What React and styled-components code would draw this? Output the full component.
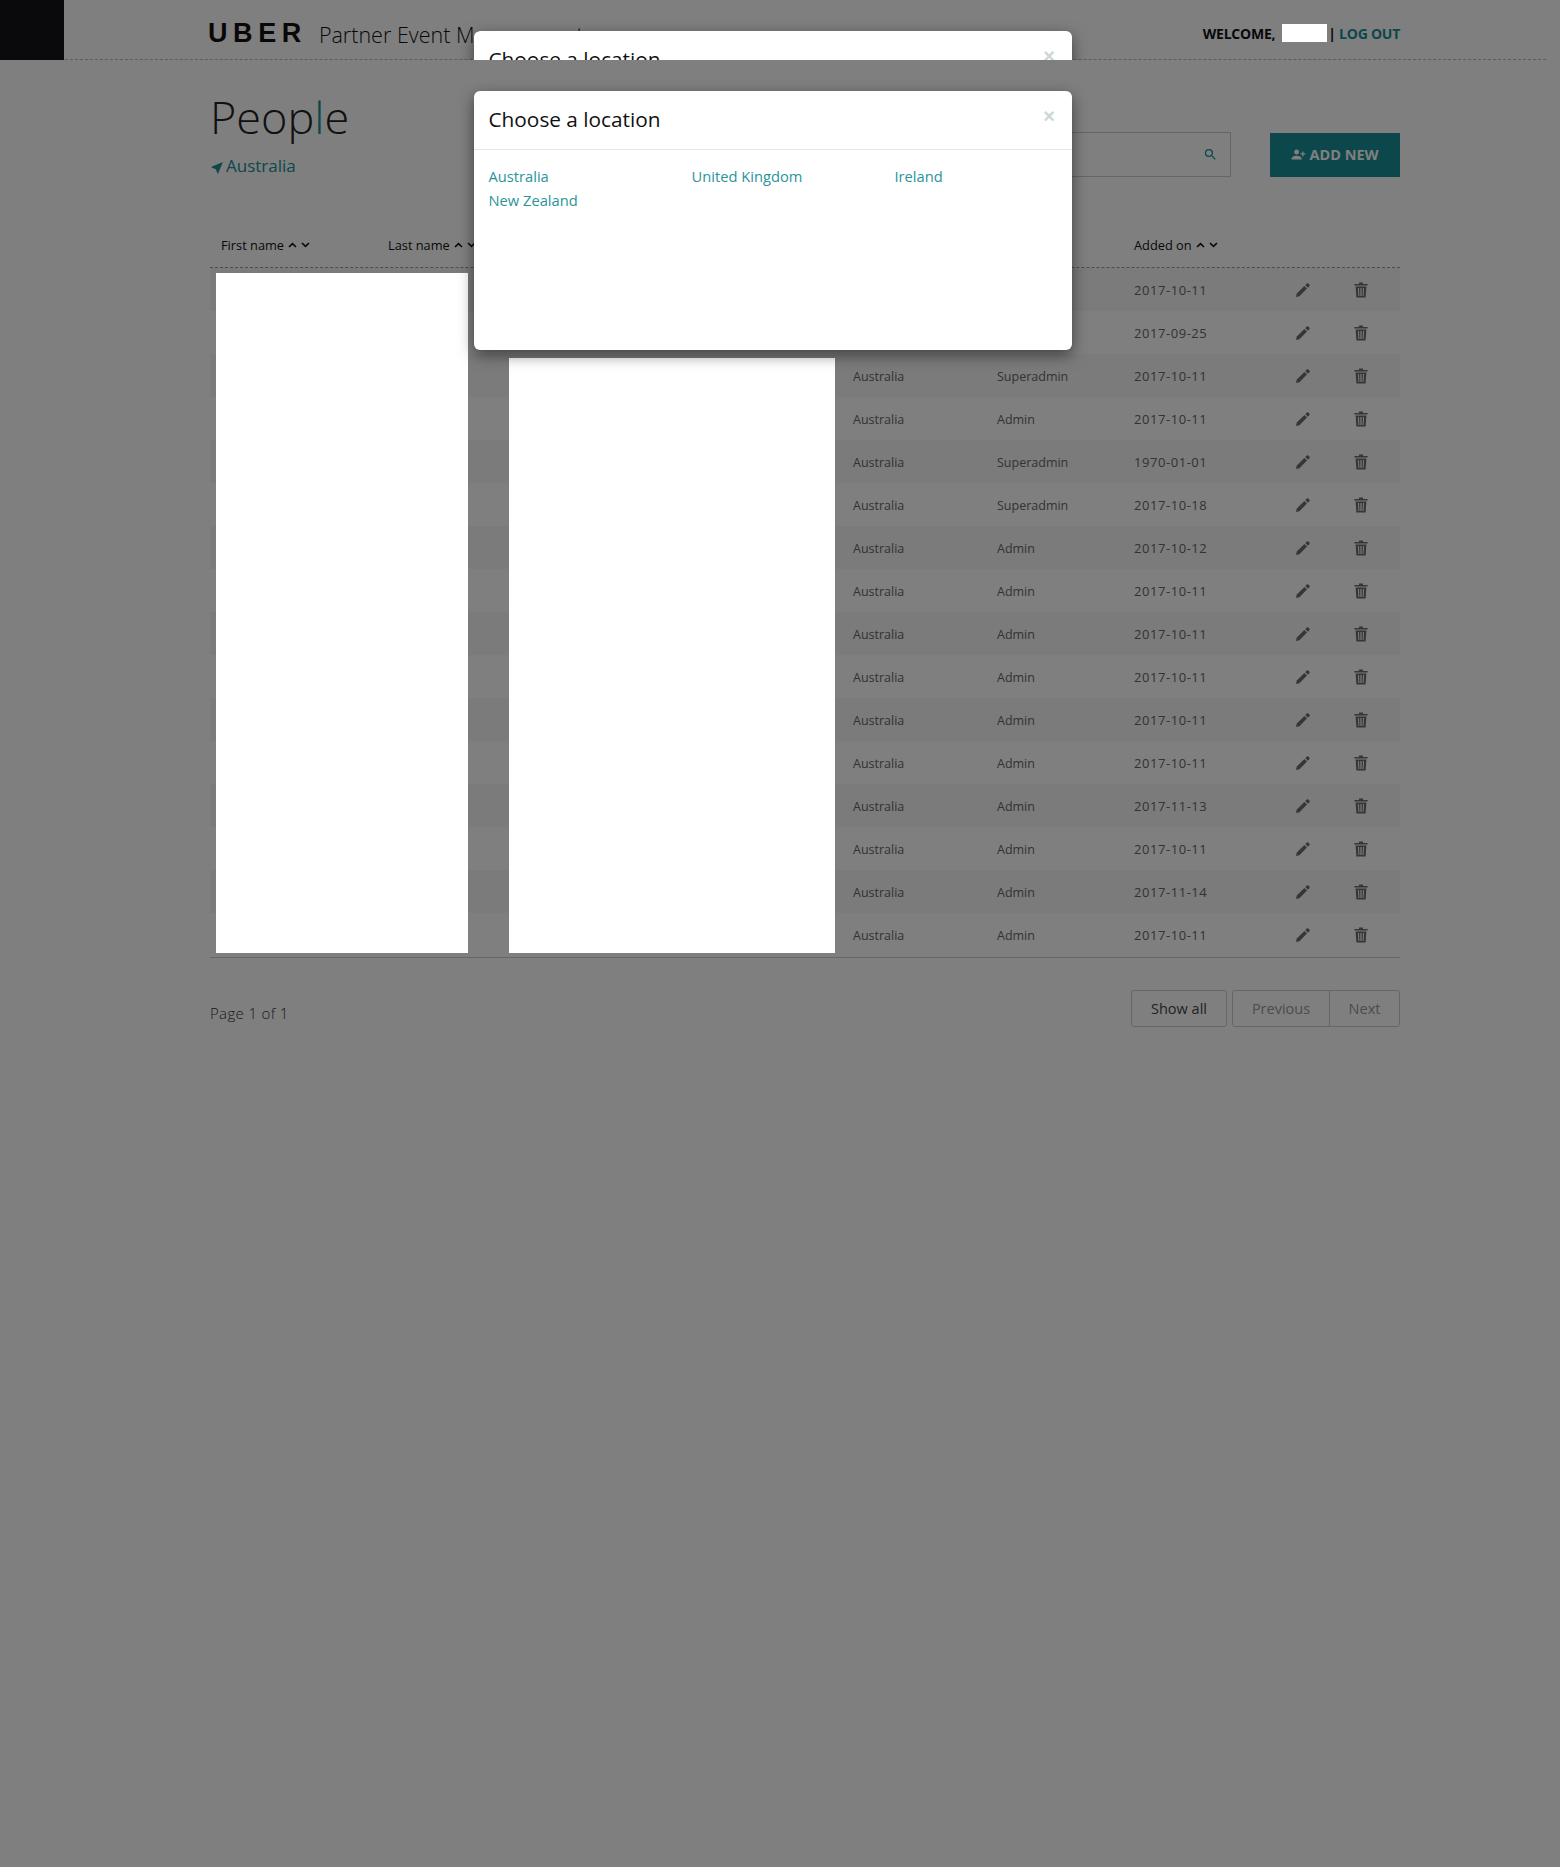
import React from 'react';
import styled, { createGlobalStyle } from 'styled-components';
import { MdPersonAdd, MdSearch, MdNavigation } from 'react-icons/md';

const Global = createGlobalStyle`
  html, body { margin: 0; padding: 0; background: #fff; }
  body { font-family: "Open Sans", "Noto Sans", sans-serif; color: #333; }
  * { box-sizing: border-box; }
`;

const Page = styled.div`
  position: relative;
  width: 1560px;
  height: 1867px;
  overflow: hidden;
`;

const Header = styled.header`
  height: 60px;
  width: 1546px;
  display: flex;
  align-items: center;
  border-bottom: 1px dashed #bbb;
`;

const BlackBox = styled.div`
  width: 64px;
  height: 60px;
  background: #14141a;
  flex: none;
`;

const Logo = styled.span`
  margin-left: 144px;
  font-family: "Liberation Sans", sans-serif;
  font-weight: 700;
  font-size: 27px;
  letter-spacing: 5.6px;
  color: #111;
  line-height: 1;
  position: relative;
  top: 4px;
`;

const AppName = styled.span`
  margin-left: 12px;
  font-size: 21.5px;
  font-weight: 300;
  color: #111;
  position: relative;
  top: 5px;
`;

const UserArea = styled.div`
  margin-left: auto;
  margin-right: 146px;
  display: flex;
  align-items: center;
  font-size: 14px;
  font-weight: 700;
  color: #111;
  white-space: pre;
  position: relative;
  top: 4px;
  letter-spacing: -.25px;
`;

const NameSlot = styled.span`
  display: inline-block;
  width: 47px;
  height: 18px;
  margin-left: 3px;
  margin-right: 3px;
`;

const LogOut = styled.a`
  color: #178f97;
`;

const Main = styled.main`
  width: 1190px;
  margin-left: 210px;
`;

const TopRow = styled.div`
  height: 165px;
  display: flex;
  position: relative;
`;

const TitleBlock = styled.div`
  padding-top: 24px;
`;

const Title = styled.h1`
  margin: 0;
  font-size: 45px;
  line-height: 66px;
  font-weight: 300;
  color: #222;
`;

const TitleAccent = styled.span`
  color: #178f97;
`;

const Place = styled.div`
  display: flex;
  align-items: center;
  font-size: 17px;
  line-height: 24px;
  color: #178f97;
  margin-top: 4px;
  svg { transform: rotate(45deg); margin: 0 0 0 1px; }
`;

const Tools = styled.div`
  margin-left: auto;
  display: flex;
  padding-top: 72px;
`;

const SearchBox = styled.div`
  width: 400px;
  height: 45px;
  border: 1px solid #ccc;
  display: flex;
  align-items: center;
  justify-content: flex-end;
  padding-right: 12px;
  color: #178f97;
`;

const AddButton = styled.button`
  width: 130px;
  height: 44px;
  margin-left: 39px;
  margin-top: 1px;
  padding: 0 0 2px;
  border: 0;
  background: #178f97;
  color: #fff;
  font-family: inherit;
  font-size: 14.5px;
  font-weight: 700;
  display: flex;
  align-items: center;
  justify-content: center;
  gap: 3px;
  svg { transform: scaleX(-1); }
`;

const HeadRow = styled.div`
  display: grid;
  grid-template-columns: 167px 465px 144px 137px 1fr;
  height: 43px;
  padding-bottom: 2px;
  align-items: center;
  border-bottom: 1px dashed #999;
  font-size: 12.8px;
  color: #111;
`;

const HeadCell = styled.div`
  padding-left: 11px;
  display: flex;
  align-items: center;
`;

const Sort = styled.span`
  display: inline-flex;
  gap: 4px;
  margin-left: 4px;
  color: #111;
`;

const Row = styled.div`
  display: grid;
  grid-template-columns: 167px 465px 144px 137px 171px 60px 1fr;
  height: 43px;
  align-items: center;
  background: ${p => (p.$odd ? '#f6f6f6' : '#fff')};
  font-size: 12.5px;
  color: #666;
`;

const Cell = styled.div`
  padding: 1px 0 0 11px;
`;

const DateCell = styled.div`
  padding-left: 11px;
  font-size: 13px;
  letter-spacing: .55px;
`;

const IconCell = styled.div`
  display: flex;
  color: #6c6c6c;
`;

const TableEnd = styled.div`
  margin-top: 1px;
  border-top: 1px solid #ccc;
`;

const Footer = styled.div`
  display: flex;
  align-items: flex-start;
  margin-top: 32px;
`;

const PageInfo = styled.div`
  font-size: 15px;
  letter-spacing: .35px;
  font-weight: 300;
  color: #333;
  padding-top: 13px;
`;

const Buttons = styled.div`
  margin-left: auto;
  display: flex;
  gap: 5px;
`;

const BtnGroup = styled.div`
  display: flex;
`;

const PageBtn = styled.button`
  height: 37px;
  width: ${p => p.$w}px;
  background: #fff;
  border: 1px solid #ccc;
  border-radius: ${p => p.$radius || '3px'};
  margin-left: ${p => (p.$joined ? '-1px' : '0')};
  font-family: inherit;
  font-size: 14.5px;
  font-weight: 500;
  color: ${p => (p.$muted ? '#999' : '#444')};
`;

const Backdrop = styled.div`
  position: absolute;
  inset: 0;
  background: rgba(0, 0, 0, .5);
`;

const Redaction = styled.div`
  position: absolute;
  background: #fff;
  left: ${p => p.$x}px;
  top: ${p => p.$y}px;
  width: ${p => p.$w}px;
  height: ${p => p.$h}px;
`;

const HeaderClip = styled.div`
  position: absolute;
  left: 0;
  top: 0;
  width: 1560px;
  height: 60px;
  overflow: hidden;
`;

const ModalBox = styled.div`
  position: absolute;
  left: 474px;
  top: ${p => p.$top}px;
  width: 598px;
  height: 259px;
  background: #fff;
  border-radius: 6px;
  box-shadow: 0 5px 15px rgba(0, 0, 0, .5);
`;

const ModalHead = styled.div`
  height: 59px;
  border-bottom: 1px solid #e5e5e5;
  display: flex;
  align-items: center;
  padding: 0 17px 2px 14.5px;
`;

const ModalTitle = styled.h4`
  margin: 0;
  font-size: 20.8px;
  font-weight: 400;
  color: #111;
`;

const Close = styled.span`
  margin-left: auto;
  font-family: "Liberation Sans", sans-serif;
  font-size: 20px;
  font-weight: 700;
  line-height: 1;
  color: #cfd6d6;
  position: relative;
  top: -3px;
`;

const LocGrid = styled.div`
  display: grid;
  grid-template-columns: repeat(3, 203px);
  padding: 14px 14.5px;
  font-size: 14.7px;
  line-height: 24px;
  color: #2a9499;
`;

const dates = ['2017-10-11','2017-09-25','2017-10-11','2017-10-11','1970-01-01','2017-10-18','2017-10-12','2017-10-11','2017-10-11','2017-10-11','2017-10-11','2017-10-11','2017-11-13','2017-10-11','2017-11-14','2017-10-11'];
const roles = ['Superadmin','Superadmin','Superadmin','Admin','Superadmin','Superadmin','Admin','Admin','Admin','Admin','Admin','Admin','Admin','Admin','Admin','Admin'];

const Chevron = ({ up }) => (
  <svg width="9" height="6" viewBox="0 0 9 6" fill="none" stroke="currentColor" strokeWidth="1.6">
    <polyline points={up ? '1,5 4.5,1.6 8,5' : '1,1 4.5,4.4 8,1'} />
  </svg>
);

const SortIcons = () => (
  <Sort>
    <Chevron up />
    <Chevron />
  </Sort>
);

const Pencil = () => (
  <svg width="18" height="18" viewBox="0 0 18 18" fill="currentColor">
    <path d="M2 16l.8-3.4 7.6-7.6 2.6 2.6-7.6 7.6z" />
    <path d="M11.3 4.1l1.6-1.6c.4-.4 1-.4 1.4 0l1.2 1.2c.4.4.4 1 0 1.4l-1.6 1.6z" />
  </svg>
);

const Trash = () => (
  <svg width="14" height="16" viewBox="0 0 14 16" fill="currentColor">
    <path d="M5 .6h4v1.3h4.6v1.7H.4V1.9H5z" />
    <path fillRule="evenodd" d="M1.6 4.4h10.8l-.8 11H2.4zM4 6l.4 8h1L5 6zM6.4 6v8h1.2V6zM9 6l-.4 8h1L10 6z" />
  </svg>
);

const Modal = ({ top }) => (
  <ModalBox $top={top}>
    <ModalHead>
      <ModalTitle>Choose a location</ModalTitle>
      <Close>×</Close>
    </ModalHead>
    <LocGrid>
      <span>Australia</span>
      <span>United Kingdom</span>
      <span>Ireland</span>
      <span>New Zealand</span>
    </LocGrid>
  </ModalBox>
);

export default function App() {
  return (
    <Page>
      <Global />
      <Header>
        <BlackBox />
        <Logo>UBER</Logo>
        <AppName>Partner Event Management</AppName>
        <UserArea>
          WELCOME,<NameSlot />| <LogOut>LOG OUT</LogOut>
        </UserArea>
      </Header>
      <Main>
        <TopRow>
          <TitleBlock>
            <Title>Peop<TitleAccent>l</TitleAccent>e</Title>
            <Place><MdNavigation size={15} />Australia</Place>
          </TitleBlock>
          <Tools>
            <SearchBox><MdSearch size={15} /></SearchBox>
            <AddButton><MdPersonAdd size={15} />ADD NEW</AddButton>
          </Tools>
        </TopRow>
        <HeadRow>
          <HeadCell>First name<SortIcons /></HeadCell>
          <HeadCell>Last name<SortIcons /></HeadCell>
          <HeadCell />
          <HeadCell />
          <HeadCell>Added on<SortIcons /></HeadCell>
        </HeadRow>
        {dates.map((d, i) => (
          <Row key={i} $odd={i % 2 === 0}>
            <Cell />
            <Cell />
            <Cell>Australia</Cell>
            <Cell>{roles[i]}</Cell>
            <DateCell>{d}</DateCell>
            <IconCell><Pencil /></IconCell>
            <IconCell><Trash /></IconCell>
          </Row>
        ))}
        <TableEnd />
        <Footer>
          <PageInfo>Page 1 of 1</PageInfo>
          <Buttons>
            <PageBtn $w={96}>Show all</PageBtn>
            <BtnGroup>
              <PageBtn $w={98} $muted $radius="3px 0 0 3px">Previous</PageBtn>
              <PageBtn $w={71} $muted $joined $radius="0 3px 3px 0">Next</PageBtn>
            </BtnGroup>
          </Buttons>
        </Footer>
      </Main>
      <Backdrop />
      <Redaction $x={1282} $y={24} $w={45} $h={18} />
      <Redaction $x={216} $y={273} $w={252} $h={680} />
      <Redaction $x={509} $y={358} $w={326} $h={595} />
      <HeaderClip><Modal top={31} /></HeaderClip>
      <Modal top={91} />
    </Page>
  );
}
